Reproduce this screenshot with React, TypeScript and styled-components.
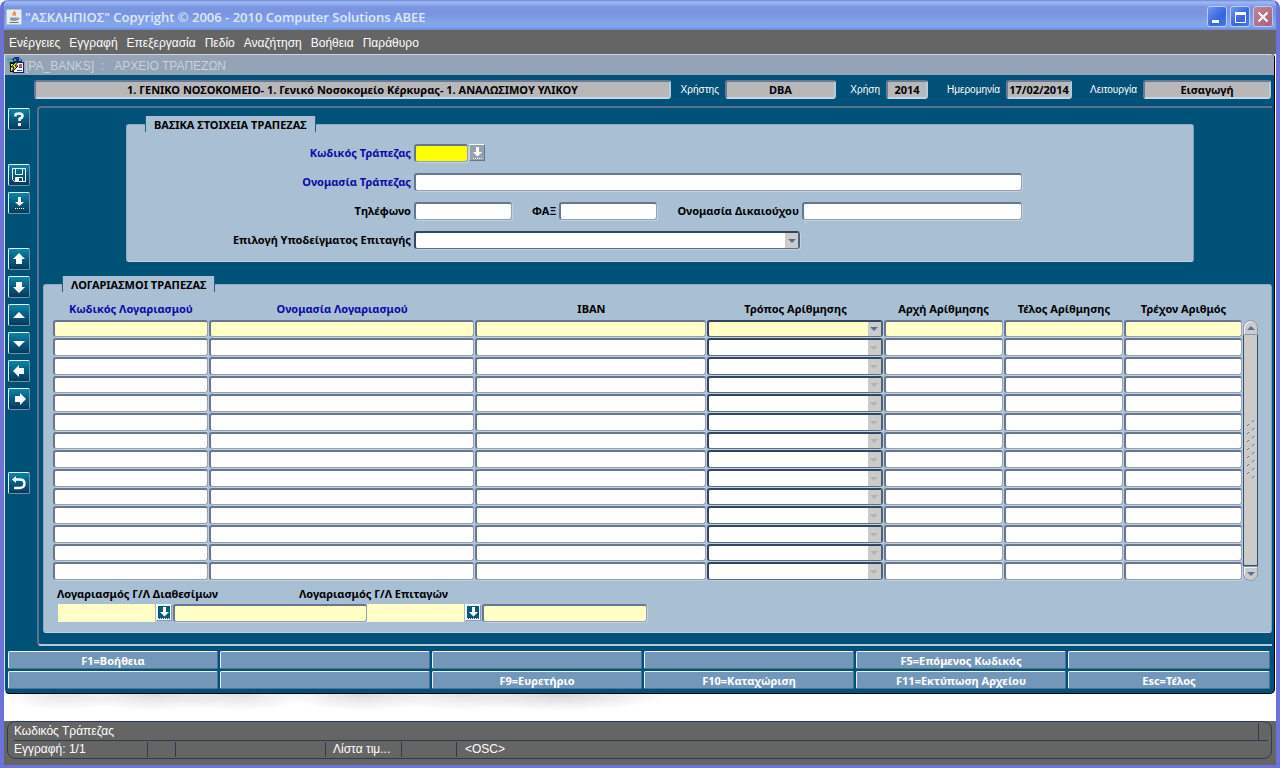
import React from "react";
import styled, { createGlobalStyle, css } from "styled-components";

const teal = "#005177";
const panel = "#a9bfd4";
const bodyFont = `"Liberation Sans", Arial, sans-serif`;
const boldFont = `"Noto Sans", "Open Sans", sans-serif`;

const GlobalStyle = createGlobalStyle`
  * { box-sizing: border-box; }
  body { margin: 0; background: #fff; font: 12px/16px ${bodyFont}; }
  button, input, select { font: inherit; color: inherit; margin: 0; padding: 0; border-radius: 0; }
  h1, h2, p { margin: 0; font-size: inherit; font-weight: inherit; }
`;

const Window = styled.div`
  display: flex;
  flex-direction: column;
  min-height: 100vh;
  border: solid #6b72d8;
  border-width: 0 4px 4px;
  border-radius: 8px 8px 0 0;
  overflow: hidden;
  background: #fff;
`;

const TitleBar = styled.header`
  display: flex;
  align-items: center;
  gap: 3px;
  height: 30px;
  margin: 0 -4px;
  padding: 3px 7px 0 6px;
  background: linear-gradient(#6f86d6 0, #9db9f0 2px, #8faeee 4px, #7b95e0 7px, #7a94e0 14px, #83a6ea 23px, #82a5e9 27px, #6e86d2 30px);
  color: #dfe8fb;
`;

const AppTitle = styled.h1`
  flex: 1;
  font: 600 13px/20px "Open Sans", "Noto Sans", sans-serif;
  white-space: nowrap;
`;

const CaptionButton = styled.button<{ $close?: boolean }>`
  display: grid;
  place-items: center;
  width: 20px;
  height: 21px;
  border: 1px solid #b9cbf5;
  border-radius: 3px;
  background: ${(p) =>
    p.$close
      ? "linear-gradient(135deg, #bf8698, #a8607a)"
      : "linear-gradient(135deg, #6f96f0, #3565e0 60%, #4a78ea)"};
`;

const MenuBar = styled.nav`
  display: flex;
  align-items: center;
  gap: 9px;
  height: 24px;
  padding: 2px 5px 0;
  background: #656565;
  color: #fff;
`;

const MenuItem = styled.button`
  border: 0;
  background: none;
  white-space: nowrap;
`;

const Child = styled.main`
  margin-right: 1px;
  border: solid #000;
  border-width: 0 1px 1px 0;
  border-left: 1px solid #d6e2ee;
  border-radius: 0 4px 5px 5px;
  background: ${teal};
  padding-bottom: 4px;
`;

const ChildTitle = styled.div`
  display: flex;
  align-items: center;
  gap: 1px;
  height: 21px;
  padding: 1px 0 0 2px;
  border-top: 1px solid #d0d4da;
  border-top-right-radius: 4px;
  background: #94a3b6;
  color: #c9d1db;
  white-space: pre;
`;

const HeaderRow = styled.div`
  display: flex;
  align-items: center;
  height: 19px;
  margin: 5px 3px 0 29px;
  color: #fff;
`;

const HeaderLabel = styled.label<{ $width: number }>`
  width: ${(p) => p.$width}px;
  padding-right: 6px;
  text-align: right;
  font: 10px/16px ${bodyFont};
  white-space: nowrap;
`;

const HeaderField = styled.input<{ $width?: number }>`
  ${(p) => (p.$width ? css`width: ${p.$width}px;` : css`flex: 1; min-width: 0;`)}
  height: 19px;
  border: solid;
  border-width: 2px;
  border-color: #6a7a92 #b6cbd9 #c4d6e2 #6a7a92;
  border-radius: 3px;
  background: #b8b8b8;
  color: #000;
  text-align: center;
  font: bold 11px/15px ${boldFont};
`;

const Workspace = styled.div`
  display: flex;
  margin-top: 7px;
`;

const ToolBar = styled.div`
  display: flex;
  flex-direction: column;
  gap: 34px;
  width: 32px;
  padding: 2px 0 0 3px;
`;

const ToolGroup = styled.div`
  display: flex;
  flex-direction: column;
  gap: 6px;

  &:last-child {
    margin-top: 28px;
  }
`;

const ToolButton = styled.button`
  display: grid;
  place-items: center;
  width: 22px;
  height: 22px;
  border: 1px solid;
  border-color: #e8f3f7 #6f93ad #6f93ad #e8f3f7;
  border-radius: 2px;
  background: linear-gradient(#0a86a6, #045c80 50%, #013a5c);
`;

const Frame = styled.div`
  flex: 1;
  min-width: 0;
  margin-right: 2px;
  padding: 8px 0 11px 4px;
  border: solid;
  border-width: 2px 0 2px 2px;
  border-color: #55718f #55718f #b4c9d8;
  border-radius: 4px 0 0 4px;
`;

const Panel = styled.section<{ $inset?: boolean }>`
  margin: ${(p) => (p.$inset ? "8px 78px 0 83px" : "22px 0 0")};
  padding-bottom: ${(p) => (p.$inset ? 12 : 10)}px;
  border: 1px solid;
  border-color: #8fabc4 #7fa0bb #c0d0de #8fabc4;
  border-radius: 3px;
  background: ${panel};
`;

const PanelTitle = styled.h2`
  width: max-content;
  height: 16px;
  margin: -9px 0 0 18px;
  padding: 1px 8px 0;
  border: solid #1b5f80;
  border-width: 0 1px;
  background: ${panel};
  font: bold 11px/16px ${boldFont};
`;

const Form = styled.div`
  display: grid;
  grid-template-columns: 284px minmax(0, 608px);
  gap: 11px 3px;
  margin-top: 12px;
`;

const fieldLook = css`
  border: solid;
  border-width: 2px 1px 1px 2px;
  border-color: #66778f #93a0b5 #93a0b5 #66778f;
  border-radius: 3px;
  box-shadow: 1px 1px 0 #c5d0da;
  background: #fff;
`;

const Label = styled.label<{ $required?: boolean }>`
  font: bold 11px/18px ${boldFont};
  color: ${(p) => (p.$required ? "#0a0aa6" : "#000")};
  text-align: right;
  white-space: nowrap;
`;

const Controls = styled.div`
  display: flex;
  align-items: flex-start;
  justify-content: space-between;
  height: 18px;
`;

const Pair = styled.div<{ $gap: number }>`
  display: flex;
  gap: ${(p) => p.$gap}px;
`;

const TextField = styled.input<{ $width?: number; $tone?: string }>`
  ${fieldLook}
  width: ${(p) => (p.$width ? `${p.$width}px` : "100%")};
  height: 18px;
  ${(p) => p.$tone && css`background: ${p.$tone};`}
`;

const LovButton = styled.button<{ $dim?: boolean }>`
  display: grid;
  place-items: center;
  width: 16px;
  height: 17px;
  border: 1px solid;
  ${(p) =>
    p.$dim
      ? css`border-color: #fff #5f7896 #5f7896 #c9d4df; background: #93a1b3;`
      : css`border-color: #fff #8a9bb0 #8a9bb0 #fff; background: #f4fbfd;`}
`;

const SelectBox = styled.div<{ $tone?: string; $width?: number }>`
  display: grid;
  grid-template-columns: 1fr 13px;
  width: ${(p) => (p.$width ? `${p.$width}px` : "100%")};
  height: 18px;
  border: solid;
  border-width: 2px 2px 1px 2px;
  border-color: #34465f #4d617c #5b6e88 #34465f;
  border-radius: 3px;
  background: ${(p) => p.$tone ?? "#fff"};
  box-shadow: 1px 1px 0 #c5d0da;
`;

const Select = styled.select`
  grid-area: 1 / 1 / 2 / 3;
  width: 100%;
  height: 100%;
  min-height: 0;
  border: 0;
  background: none;
  appearance: none;
`;

const SelectArrow = styled.span<{ $dim?: boolean }>`
  grid-area: 1 / 2 / 2 / 3;
  display: grid;
  place-items: center;
  background: #cbcbcb;
  color: ${(p) => (p.$dim ? "#b3b3b3" : "#5f7192")};
  pointer-events: none;
`;

const GridArea = styled.div`
  display: flex;
  align-items: flex-end;
  margin: 9px 13px 0 9px;
`;

const Accounts = styled.table`
  flex: 1;
  min-width: 0;
  table-layout: fixed;
  border-collapse: collapse;
`;

const HeadCell = styled.th<{ $width: number; $required?: boolean }>`
  width: ${(p) => p.$width}%;
  height: 19px;
  padding: 0 0 3px;
  font: bold 11px/16px ${boldFont};
  color: ${(p) => (p.$required ? "#0a0aa6" : "#000")};
  white-space: nowrap;
`;

const Row = styled.tr`
  & > td { height: 19px; }
  &:nth-child(3n + 1) > td { height: 18px; }
`;

const Cell = styled.td`
  padding: 0 1px 1px 0;

  & > input, & > div {
    display: grid;
    width: 100%;
    height: 17px;
  }
  ${Row}:not(:nth-child(3n + 1)) > & > * {
    height: 18px;
  }
`;

const ScrollBar = styled.div`
  display: flex;
  flex-direction: column;
  width: 15px;
  height: 261px;
`;

const ScrollButton = styled.button<{ $end?: boolean }>`
  display: grid;
  place-items: center;
  width: 15px;
  height: 15px;
  border: 1px solid #8a97ab;
  border-radius: ${(p) => (p.$end ? "0 0 8px 8px" : "8px 8px 0 0")};
  background: #cbcbcb;
  box-shadow: inset 1px 1px 0 #eef2f5;
  color: #5f7192;
`;

const ScrollThumb = styled.div`
  flex: 1;
  display: grid;
  place-items: center;
  border: solid #2f4e68;
  border-width: 0 1px 1px;
  background: #cbcbcb;
`;

const Ledger = styled.div`
  display: flex;
  flex-wrap: wrap;
  margin: 4px 0 0 14px;
`;

const LedgerGroup = styled.div<{ $width: number }>`
  display: grid;
  grid-template-columns: 97px 16px 1fr;
  gap: 1px;
  width: ${(p) => p.$width}px;
`;

const LedgerLabel = styled(Label)<{ $indent?: boolean }>`
  grid-column: 1 / -1;
  text-align: left;
  margin-left: ${(p) => (p.$indent ? "-68px" : "-1px")};
`;

const FlatField = styled.input`
  width: 97px;
  height: 18px;
  border: 0;
  background: #ffffc6;
`;

const KeyGrid = styled.div`
  display: grid;
  grid-template-columns: repeat(5, minmax(0, 210fr)) minmax(0, 202fr);
  gap: 2px;
  margin: 5px 4px 0 3px;
`;

const KeyButton = styled.button`
  height: 18px;
  border: 1px solid;
  border-color: #e6f2f8 #4f7396 #4f7396 #e6f2f8;
  border-radius: 2px;
  background: #7397b9;
  color: #fff;
  font: bold 11px/15px ${boldFont};
  white-space: nowrap;
`;

const Desk = styled.div`
  flex: 1;
  min-height: 27px;
  background:
    radial-gradient(60px 17px at 60px 0, #e4e4e4, transparent),
    radial-gradient(80px 17px at 150px 0, #dcdcdc, transparent),
    radial-gradient(70px 17px at 235px 0, #e0e0e0, transparent),
    radial-gradient(80px 17px at 360px 0, #dcdcdc, transparent),
    radial-gradient(70px 17px at 460px 0, #e2e2e2, transparent),
    radial-gradient(110px 17px at 555px 0, #d6d6d6, transparent);
`;

const StatusArea = styled.footer`
  padding: 0 4px 6px 3px;
  background: #656565;
  color: #fff;
`;

const StatusBox = styled.div`
  padding: 0 3px 0 6px;
  border: 1px solid #2c3a52;
  border-radius: 8px;
`;

const StatusHint = styled.p`
  height: 19px;
  padding-top: 1px;
  border-bottom: 1px solid #2c3a52;
  line-height: 17px;
`;

const HintText = styled.span`
  display: block;
  margin-right: 9px;
  border-right: 1px solid #2c3a52;
`;

const StatusRow = styled.div`
  display: flex;
  height: 17px;
  padding: 1px 0;
`;

const StatusCell = styled.span<{ $width?: number; $pad?: number }>`
  ${(p) => (p.$width ? css`width: ${p.$width}px; border-right: 1px solid #2c3a52;` : css`flex: 1;`)}
  padding-left: ${(p) => p.$pad ?? 0}px;
  line-height: 15px;
  white-space: nowrap;
`;

const JavaIcon = () => (
  <svg width="16" height="16" viewBox="0 0 16 16" aria-hidden="true">
    <rect x="0.5" y="0.5" width="15" height="15" rx="1" fill="#e9edf0" stroke="#b8c3d2" />
    <path d="M8.5 2c1 1.500-2.500 2.500-1.500 4.500M10 4c-1.500 1-1.500 1.500-1 3" fill="none" stroke="#e07b2a" strokeWidth="1.300" />
    <path d="M4 8.500h7v1.500c0 1-1 2-2 2H6c-1 0-2-1-2-2z" fill="#8a9aac" />
    <path d="M11 9h1.500c.8 1-.5 2-2 2M3.500 13.500h9" fill="none" stroke="#5f7186" />
  </svg>
);

const FormIcon = () => (
  <svg width="17" height="17" viewBox="0 0 17 17" aria-hidden="true">
    <path d="M5 2l3-2h4l3 3v3H7z" fill="#1c2f86" />
    <path d="M7 2h2v2H7zM12 1h2v3h-2z" fill="#3ba79c" />
    <path d="M0 2.500h5M1 5.500h4M2 8.500h2" stroke="#3ba79c" strokeWidth="2" />
    <path d="M3 5h9v10H3z" fill="#111" />
    <path d="M4 7h3v7H4z" fill="#f7ef5a" />
    <rect x="6.500" y="5.500" width="10" height="10" fill="#fff" stroke="#1b1f6b" />
    <path d="M12 8h3M12 10.500h3M10 13.500h5" stroke="#2a3fb4" />
    <rect x="12" y="7" width="3" height="3" fill="#d65a4a" />
    <path d="M9 5L4 10h3l-2 5 6-6H8l3-4z" fill="#f4e52c" stroke="#111" strokeWidth="1" />
  </svg>
);

type GlyphName = "help" | "save" | "enter" | "up" | "down" | "prev" | "next" | "left" | "right" | "undo";

const glyphs: Record<GlyphName, React.ReactNode> = {
  help: (
    <>
      <path d="M4.500 5.500V4Q4.500 2.500 8 2.500T11.500 5Q11.500 6.500 8.500 8V10" fill="none" stroke="#fff" strokeWidth="2.600" />
      <rect x="7" y="12" width="3" height="3" fill="#fff" />
    </>
  ),
  save: (
    <>
      <path d="M1.500 1.500h13v13H3.500l-2-2z" fill="none" stroke="#fff" />
      <path d="M4.500 1.500v6h7v-6" fill="none" stroke="#fff" />
      <path d="M4.500 15v-4.500h7V15" fill="none" stroke="#fff" />
      <rect x="5" y="11" width="3" height="4" fill="#fff" />
    </>
  ),
  enter: (
    <>
      <path d="M7 2h3v5h3l-4.500 4L4 7h3z" fill="#fff" />
      <path d="M4 13.500h9" stroke="#fff" strokeDasharray="1 1" />
    </>
  ),
  up: <path d="M8 2l6 6h-3v5H5V8H2z" fill="#fff" />,
  down: <path d="M8 14l6-6h-3V3H5v5H2z" fill="#fff" />,
  prev: <path d="M8 5l6 6H2z" fill="#fff" />,
  next: <path d="M8 12l6-6H2z" fill="#fff" />,
  left: <path d="M2 8l6-6v3h5v6H8v3z" fill="#fff" />,
  right: <path d="M15 8L9 2v3H4v6h5v3z" fill="#fff" />,
  undo: (
    <>
      <path d="M4 4.500h5Q13.500 4.500 13.500 8.500T9 13H3" fill="none" stroke="#fff" strokeWidth="2.400" />
      <path d="M1 4.500L5 1v7z" fill="#fff" />
    </>
  ),
};

const Glyph = ({ name }: { name: GlyphName }) => (
  <svg width="16" height="16" viewBox="0 0 16 16" aria-hidden="true">{glyphs[name]}</svg>
);

const Triangle = ({ up }: { up?: boolean }) => (
  <svg width="8" height="4" viewBox="0 0 8 4" aria-hidden="true">
    <path d={up ? "M4 0l4 4H0z" : "M0 0h8L4 4z"} fill="currentColor" />
  </svg>
);

const LovIcon = ({ dark }: { dark?: boolean }) => (
  <svg width="12" height="13" viewBox="0 0 12 13" aria-hidden="true">
    {dark && <path d="M0 0h12v13h-1v-1h-1v1H9v-1H8v1H7v-1H6v1H5v-1H4v1H3v-1H2v1H1v-1H0z" fill="#04597c" />}
    <path d="M5 1h3v5h3L6.500 10.500 2 6h3z" fill="#fff" />
    {!dark && <path d="M2 12.500h9" stroke="#fff" strokeDasharray="1 1" />}
  </svg>
);

const Grip = () => (
  <svg width="9" height="60" viewBox="0 0 9 60" aria-hidden="true">
    {Array.from({ length: 15 }, (_, i) => (
      <path key={i} d={`M${i % 2 ? 1 : 6} ${2 + i * 4}l2-2`} stroke="#5f7192" />
    ))}
  </svg>
);

const tools: { name: GlyphName; label: string }[][] = [
  [{ name: "help", label: "Βοήθεια" }],
  [
    { name: "save", label: "Αποθήκευση" },
    { name: "enter", label: "Επιλογή" },
  ],
  [
    { name: "up", label: "Πρώτη εγγραφή" },
    { name: "down", label: "Τελευταία εγγραφή" },
    { name: "prev", label: "Προηγούμενη εγγραφή" },
    { name: "next", label: "Επόμενη εγγραφή" },
    { name: "left", label: "Προηγούμενο πεδίο" },
    { name: "right", label: "Επόμενο πεδίο" },
  ],
  [{ name: "undo", label: "Επιστροφή" }],
];

const menu = ["Ενέργειες", "Εγγραφή", "Επεξεργασία", "Πεδίο", "Αναζήτηση", "Βοήθεια", "Παράθυρο"];

const columns = [
  { title: "Κωδικός Λογαριασμού", width: 13.1, required: true },
  { title: "Ονομασία Λογαριασμού", width: 22.4, required: true },
  { title: "IBAN", width: 19.5 },
  { title: "Τρόπος Αρίθμησης", width: 14.8, select: true },
  { title: "Αρχή Αρίθμησης", width: 10.1 },
  { title: "Τέλος Αρίθμησης", width: 10.1 },
  { title: "Τρέχον Αριθμός", width: 10.1 },
];

const keys = [
  "F1=Βοήθεια", "", "", "", "F5=Επόμενος Κωδικός", "",
  "", "", "F9=Ευρετήριο", "F10=Καταχώριση", "F11=Εκτύπωση Αρχείου", "Esc=Τέλος",
];

export default function App() {
  return (
    <>
      <GlobalStyle />
      <Window>
        <TitleBar>
          <JavaIcon />
          <AppTitle>"ΑΣΚΛΗΠΙΟΣ" Copyright © 2006 - 2010 Computer Solutions ABEE</AppTitle>
          <CaptionButton aria-label="Ελαχιστοποίηση">
            <svg width="14" height="14" aria-hidden="true"><rect x="2" y="10" width="7" height="3" fill="#fff" /></svg>
          </CaptionButton>
          <CaptionButton aria-label="Μεγιστοποίηση">
            <svg width="14" height="14" aria-hidden="true">
              <rect x="2.500" y="2.500" width="10" height="10" fill="none" stroke="#fff" />
              <rect x="2" y="2" width="11" height="3" fill="#fff" />
            </svg>
          </CaptionButton>
          <CaptionButton $close aria-label="Κλείσιμο">
            <svg width="14" height="14" aria-hidden="true"><path d="M2.500 2.500l9 9M11.500 2.500l-9 9" stroke="#fff" strokeWidth="2" /></svg>
          </CaptionButton>
        </TitleBar>
        <MenuBar>
          {menu.map((m) => <MenuItem key={m}>{m}</MenuItem>)}
        </MenuBar>
        <Child>
          <ChildTitle>
            <FormIcon />
            <span>{"[PA_BANKS]  :   ΑΡΧΕΙΟ ΤΡΑΠΕΖΩΝ"}</span>
          </ChildTitle>
          <HeaderRow>
            <HeaderField aria-label="Μονάδα" readOnly defaultValue="1. ΓΕΝΙΚΟ ΝΟΣΟΚΟΜΕΙΟ- 1. Γενικό Νοσοκομείο Κέρκυρας- 1. ΑΝΑΛΩΣΙΜΟΥ ΥΛΙΚΟΥ" />
            <HeaderLabel $width={54} htmlFor="user">Χρήστης</HeaderLabel>
            <HeaderField $width={111} id="user" readOnly defaultValue="DBA" />
            <HeaderLabel $width={50} htmlFor="year">Χρήση</HeaderLabel>
            <HeaderField $width={42} id="year" readOnly defaultValue="2014" />
            <HeaderLabel $width={78} htmlFor="date">Ημερομηνία</HeaderLabel>
            <HeaderField $width={66} id="date" readOnly defaultValue="17/02/2014" />
            <HeaderLabel $width={71} htmlFor="mode">Λειτουργία</HeaderLabel>
            <HeaderField $width={128} id="mode" readOnly defaultValue="Εισαγωγή" />
          </HeaderRow>
          <Workspace>
            <ToolBar>
              {tools.map((group, i) => (
                <ToolGroup key={i}>
                  {group.map((t) => (
                    <ToolButton key={t.name} aria-label={t.label}><Glyph name={t.name} /></ToolButton>
                  ))}
                </ToolGroup>
              ))}
            </ToolBar>
            <Frame>
              <Panel $inset>
                <PanelTitle>ΒΑΣΙΚΑ ΣΤΟΙΧΕΙΑ ΤΡΑΠΕΖΑΣ</PanelTitle>
                <Form>
                  <Label $required htmlFor="code">Κωδικός Τράπεζας</Label>
                  <Controls>
                    <Pair $gap={1}>
                      <TextField id="code" $width={54} $tone="#ffff00" />
                      <LovButton $dim aria-label="Λίστα τραπεζών"><LovIcon /></LovButton>
                    </Pair>
                  </Controls>
                  <Label $required htmlFor="name">Ονομασία Τράπεζας</Label>
                  <Controls><TextField id="name" /></Controls>
                  <Label htmlFor="phone">Τηλέφωνο</Label>
                  <Controls>
                    <TextField id="phone" $width={98} />
                    <Pair $gap={3}>
                      <Label htmlFor="fax">ΦΑΞ</Label>
                      <TextField id="fax" $width={98} />
                    </Pair>
                    <Pair $gap={3}>
                      <Label htmlFor="owner">Ονομασία Δικαιούχου</Label>
                      <TextField id="owner" $width={220} />
                    </Pair>
                  </Controls>
                  <Label htmlFor="template">Επιλογή Υποδείγματος Επιταγής</Label>
                  <Controls>
                    <SelectBox $width={386}>
                      <Select id="template" />
                      <SelectArrow><Triangle /></SelectArrow>
                    </SelectBox>
                  </Controls>
                </Form>
              </Panel>
              <Panel>
                <PanelTitle>ΛΟΓΑΡΙΑΣΜΟΙ ΤΡΑΠΕΖΑΣ</PanelTitle>
                <GridArea>
                  <Accounts>
                    <thead>
                      <tr>
                        {columns.map((c) => (
                          <HeadCell key={c.title} scope="col" $width={c.width} $required={c.required}>{c.title}</HeadCell>
                        ))}
                      </tr>
                    </thead>
                    <tbody>
                      {Array.from({ length: 14 }, (_, r) => {
                        const tone = r === 0 ? "#ffffc6" : "#fff";
                        return (
                          <Row key={r}>
                            {columns.map((c) => (
                              <Cell key={c.title}>
                                {c.select ? (
                                  <SelectBox $tone={tone}>
                                    <Select aria-label={`${c.title} ${r + 1}`} />
                                    <SelectArrow $dim={r > 0}><Triangle /></SelectArrow>
                                  </SelectBox>
                                ) : (
                                  <TextField aria-label={`${c.title} ${r + 1}`} $tone={tone} />
                                )}
                              </Cell>
                            ))}
                          </Row>
                        );
                      })}
                    </tbody>
                  </Accounts>
                  <ScrollBar>
                    <ScrollButton aria-label="Πάνω"><Triangle up /></ScrollButton>
                    <ScrollThumb><Grip /></ScrollThumb>
                    <ScrollButton $end aria-label="Κάτω"><Triangle /></ScrollButton>
                  </ScrollBar>
                </GridArea>
                <Ledger>
                  <LedgerGroup $width={309}>
                    <LedgerLabel htmlFor="available">Λογαριασμός Γ/Λ Διαθεσίμων</LedgerLabel>
                    <FlatField id="available" />
                    <LovButton aria-label="Λίστα διαθεσίμων"><LovIcon dark /></LovButton>
                    <TextField aria-label="Περιγραφή διαθεσίμων" $tone="#ffffc6" />
                  </LedgerGroup>
                  <LedgerGroup $width={280}>
                    <LedgerLabel $indent htmlFor="cheques">Λογαριασμός Γ/Λ Επιταγών</LedgerLabel>
                    <FlatField id="cheques" />
                    <LovButton aria-label="Λίστα επιταγών"><LovIcon dark /></LovButton>
                    <TextField aria-label="Περιγραφή επιταγών" $tone="#ffffc6" />
                  </LedgerGroup>
                </Ledger>
              </Panel>
            </Frame>
          </Workspace>
          <KeyGrid>
            {keys.map((k, i) => <KeyButton key={i}>{k}</KeyButton>)}
          </KeyGrid>
        </Child>
        <Desk />
        <StatusArea>
          <StatusBox>
            <StatusHint><HintText>Κωδικός Τράπεζας</HintText></StatusHint>
            <StatusRow>
              <StatusCell $width={134}>Εγγραφή: 1/1</StatusCell>
              <StatusCell $width={28} />
              <StatusCell $width={150} />
              <StatusCell $width={76} $pad={7}>Λίστα τιμ...</StatusCell>
              <StatusCell $width={55} />
              <StatusCell $pad={8}>&lt;OSC&gt;</StatusCell>
            </StatusRow>
          </StatusBox>
        </StatusArea>
      </Window>
    </>
  );
}
